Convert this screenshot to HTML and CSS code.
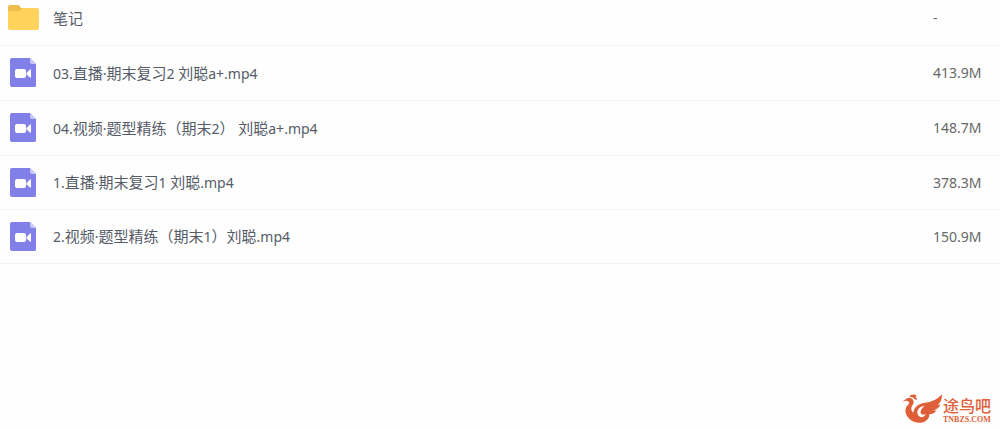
FILE: index.html
```html
<!DOCTYPE html>
<html lang="zh-CN">
<head>
<meta charset="utf-8">
<title>文件列表</title>
<link rel="stylesheet" href="styles.css">
</head>
<body>
<svg class="defs" aria-hidden="true">
  <symbol id="video" viewBox="0 0 26 30">
    <path fill="#817fe8" d="M2 0H20L26 6V27.500Q26 29 24 29H2Q0 29 0 27V2Q0 0 2 0Z"/>
    <path fill="#c9c8fa" d="M20 0L26 6H22Q20 6 20 4Z"/>
    <rect x="5" y="11" width="11" height="9" rx="2" fill="#fff"/>
    <path fill="#fff" d="M16.500 15L20 11.500Q21 11 21 12V19Q21 20 20 19.500L16.500 16.500Z"/>
  </symbol>
</svg>
<main class="files">
  <table class="list">
    <tbody>
      <tr>
        <td class="icon"><svg class="folder" viewBox="0 0 32 26" role="img" aria-label="文件夹"><path fill="#eebd4e" d="M2 0H10Q11.500 0 12 1.500L13 3H29V12H0V2Q0 0 2 0Z"/><path fill="#ffd35c" d="M0 6H10Q12 6 13 4.500Q14 3 15.500 3H29Q31 3 31 5V23Q31 25 29 25H2Q0 25 0 23Z"/></svg></td>
        <td class="name">笔记</td>
        <td class="size">-</td>
      </tr>
      <tr>
        <td class="icon"><svg class="video" role="img" aria-label="视频"><use href="#video"/></svg></td>
        <td class="name"><span class="latin">03.</span>直播<span class="latin">·</span>期末复习<span class="latin">2 </span>刘聪<span class="latin">a+.mp4</span></td>
        <td class="size">413.9M</td>
      </tr>
      <tr>
        <td class="icon"><svg class="video" role="img" aria-label="视频"><use href="#video"/></svg></td>
        <td class="name"><span class="latin">04.</span>视频<span class="latin">·</span>题型精练（期末<span class="latin">2</span>）<span class="latin"> </span>刘聪<span class="latin">a+.mp4</span></td>
        <td class="size">148.7M</td>
      </tr>
      <tr>
        <td class="icon"><svg class="video" role="img" aria-label="视频"><use href="#video"/></svg></td>
        <td class="name"><span class="latin">1.</span>直播<span class="latin">·</span>期末复习<span class="latin">1 </span>刘聪<span class="latin">.mp4</span></td>
        <td class="size">378.3M</td>
      </tr>
      <tr>
        <td class="icon"><svg class="video" role="img" aria-label="视频"><use href="#video"/></svg></td>
        <td class="name"><span class="latin">2.</span>视频<span class="latin">·</span>题型精练（期末<span class="latin">1</span>）刘聪<span class="latin">.mp4</span></td>
        <td class="size">150.9M</td>
      </tr>
    </tbody>
  </table>
</main>
<footer class="brand">
  <svg class="bird" viewBox="0 0 120 90" aria-hidden="true">
    <g fill="#df6038">
      <path d="M0 25L11 17Q19 9 29 15Q40 23 31 36C26 43 27 50 34 58C36 40 50 31 68 28Q99 25 120 2Q120 24 107 34Q113 34 116 32Q109 47 94 50Q99 52 104 50Q96 62 82 62Q83 78 64 86Q40 93 22 76C6 60 8 43 19 33Q25 26 18 23Q12 20 0 25Z"/>
      <path d="M23 10Q23 3 31 4Q37 1 42 5Q45 9 40 11Q47 13 45 18Q41 20 37 16Q32 10 23 10Z"/>
    </g>
    <path fill="#fefefe" d="M68 37C49 40 43 52 48 64C53 75 68 73 71 61Q64 67 57 61Q51 52 68 37Z"/>
  </svg>
  <div class="brand-text">
    <span class="brand-name">途鸟吧</span>
    <span class="brand-site">TNBZS.COM</span>
  </div>
</footer>
</body>
</html>
```
FILE: styles.css
```css
* {
  box-sizing: border-box;
}

body {
  margin: 0;
  min-height: 100vh;
  display: flex;
  flex-direction: column;
  background: #fefefe;
  color: #555b67;
  font-family: "Noto Sans", "Noto Sans CJK SC", sans-serif;
  font-size: 15px;
  line-height: 20px;
}

.defs {
  position: absolute;
  width: 0;
  height: 0;
}

/* The list is scrolled slightly, so its first row is cut at the top. */
.files {
  margin-top: -9px;
}

.list {
  width: 100%;
  table-layout: fixed;
  border-collapse: separate;
  border-spacing: 0;
}

.list td {
  height: 54px;
  padding: 0;
  border-bottom: 1px solid #f3f3f5;
  vertical-align: middle;
}

.list tr:nth-child(-n + 3) td {
  height: 55px;
}

.list .icon {
  width: 53px;
  padding-left: 8px;
}

.list .size {
  width: 67px;
  color: #686868;
  font-size: 14px;
}

.icon svg {
  display: block;
}

.folder {
  width: 32px;
  height: 26px;
}

.video {
  width: 26px;
  height: 30px;
  margin-left: 2px;
}

.name {
  white-space: pre;
}

.latin {
  font-size: 14px;
}

.brand {
  display: flex;
  align-items: flex-end;
  align-self: flex-end;
  gap: 1px;
  margin-top: auto;
  padding: 0 9px 4px 0;
  color: #df6038;
}

.bird {
  width: 40px;
  height: 31px;
}

.brand-text {
  display: flex;
  flex-direction: column;
  gap: 3px;
}

.brand-name {
  font-family: "Noto Sans CJK SC", sans-serif;
  font-size: 16px;
  font-weight: 500;
  line-height: 16px;
}

.brand-site {
  font-family: "Liberation Serif", serif;
  font-size: 8px;
  font-weight: 700;
  line-height: 8px;
}
```
